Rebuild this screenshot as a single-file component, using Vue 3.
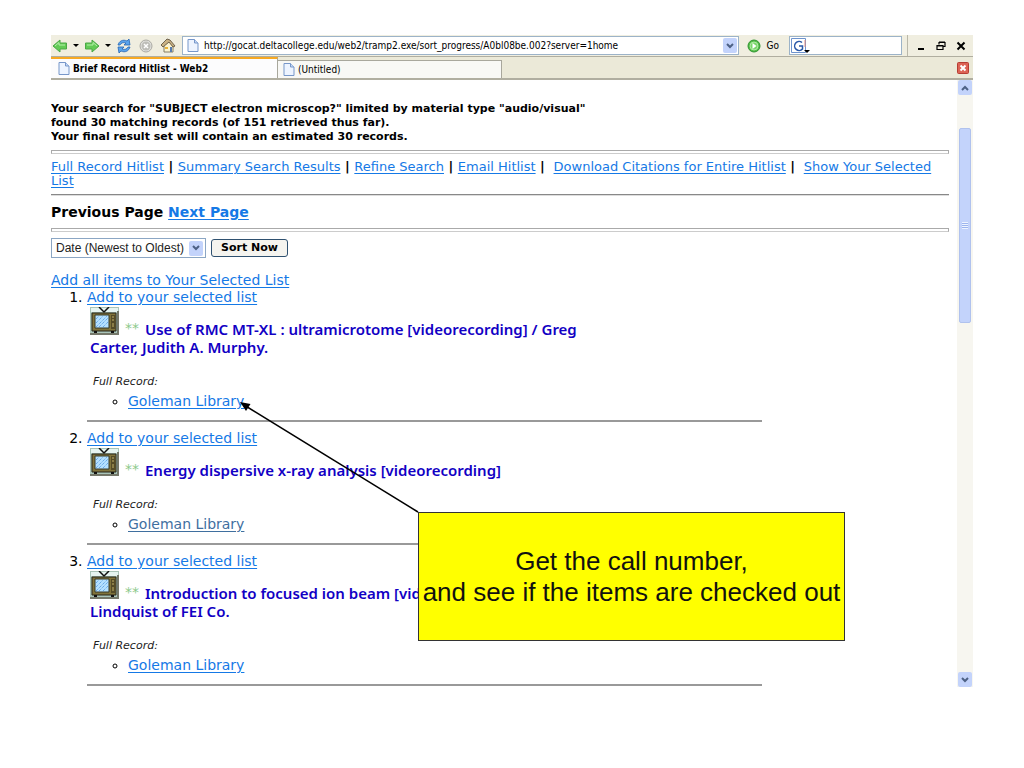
<script setup>
import { ref } from 'vue'

const address = ref('http://gocat.deltacollege.edu/web2/tramp2.exe/sort_progress/A0bl08be.002?server=1home')
const search = ref('')
const sort = ref('date')
const navRows = [
  ['Full Record Hitlist', 'Summary Search Results', 'Refine Search', 'Email Hitlist'],
  ['Download Citations for Entire Hitlist'],
]
const records = [
  { lines: ['Use of RMC MT-XL : ultramicrotome [videorecording] / Greg', 'Carter, Judith A. Murphy.'] },
  { lines: ['Energy dispersive x-ray analysis [videorecording]'], visited: true },
  { lines: ['Introduction to focused ion beam [vide', 'Lindquist of FEI Co.'] },
]
</script>

<template>
  <main class="slide">
    <div class="window">
      <header class="toolbar">
        <button class="nav-btn" aria-label="Back">
          <svg width="16" height="14" viewBox="0 0 16 14"><path d="M1 7 8 1v3h6.500v6H8v3z" fill="#62cb55" stroke="#4aa846" stroke-linejoin="round" /><path d="M3 7 7 3.500V6h6" fill="none" stroke="#b5efaa" /></svg>
        </button>
        <i class="caret"></i>
        <button class="nav-btn" aria-label="Forward">
          <svg width="16" height="14" viewBox="0 0 16 14"><path d="M15 7 8 1v3H1.500v6H8v3z" fill="#62cb55" stroke="#4aa846" stroke-linejoin="round" /><path d="M3 6h6V3.500L13 7" fill="none" stroke="#b5efaa" /></svg>
        </button>
        <i class="caret"></i>
        <button class="nav-btn reload" aria-label="Reload">
          <svg width="16" height="16" viewBox="0 0 16 16"><path d="M2 7C3 3 7 1 11 3l2-2 1 6H8l2-2C7 4 5 5 4 7z" fill="#5aa4ed" stroke="#2464b4" stroke-width=".8" /><path d="M14 9c-1 4-5 6-9 4l-2 2-1-6h6l-2 2c3 1 5 0 6-2z" fill="#5aa4ed" stroke="#2464b4" stroke-width=".8" /></svg>
        </button>
        <button class="nav-btn stop" aria-label="Stop">
          <svg width="14" height="14" viewBox="0 0 14 14"><circle cx="7" cy="7" r="6" fill="#e2e2de" stroke="#aaa9a3" /><circle cx="7" cy="7" r="4.500" fill="#bdbdb8" /><path d="m5 5 4 4m0-4-4 4" stroke="#fff" stroke-width="1.500" /></svg>
        </button>
        <button class="nav-btn home" aria-label="Home">
          <svg width="16" height="15" viewBox="0 0 16 15"><path d="M4 7v7h9V7L9 3z" fill="#fbf4cf" stroke="#847c65" /><path d="M1 7 7 1l3 1 5 6-2 1-4-5-6 5z" fill="#c9b183" stroke="#6f624c" /><path d="M10 9h2v5h-2z" fill="#567bb0" /><path d="M5 9h3v2H5z" fill="#e9b338" /></svg>
        </button>
        <label class="address">
          <svg class="page-icon" width="12" height="13" viewBox="0 0 12 13"><path d="M1 .5h6.500L11 4v8.500H1z" fill="#edf4ff" stroke="#7797c9" /><path d="M7.500.5V4H11" fill="#c5d9f7" stroke="#7797c9" /></svg>
          <input v-model="address" type="text" aria-label="Address" />
          <button class="drop" aria-label="Show history"><svg width="8" height="6" viewBox="0 0 8 6"><path d="m1 1 3 3 3-3" fill="none" stroke="#4d6185" stroke-width="2" /></svg></button>
        </label>
        <button class="go">
          <svg width="14" height="14" viewBox="0 0 14 14"><circle cx="7" cy="7" r="6" fill="#54bd48" stroke="#2f9431" /><circle cx="7" cy="7" r="4" fill="#7bd66c" stroke="#c9f3c0" stroke-width=".7" /><path d="m5.500 4 4 3-4 3z" fill="#fff" /></svg>
          <span>Go</span>
        </button>
        <label class="search">
          <svg width="20" height="16" viewBox="0 0 20 16"><path d="M.5.500h14v14H.5z" fill="#fff" stroke="#6d93cd" /><path d="M11 4.500A4.500 4.500 0 1 0 11.500 11V8H8" fill="none" stroke="#2a58a8" stroke-width="1.500" /><path d="M14 2v7" stroke="#e58a7c" /><path d="M13 12h6l-3 3z" fill="#000" /></svg>
          <input v-model="search" type="text" aria-label="Search" />
        </label>
        <div class="controls">
          <button aria-label="Minimize"><svg width="10" height="10" viewBox="0 0 10 10"><path d="M2 8h6" stroke="#000" stroke-width="2" /></svg></button>
          <button aria-label="Restore"><svg width="10" height="10" viewBox="0 0 10 10"><path d="M3 3.500V1.500h6v4H7M1 4.500h6v4H1zM1 5h6M3 1h6" fill="none" stroke="#000" stroke-width="1.200" /></svg></button>
          <button aria-label="Close"><svg width="10" height="10" viewBox="0 0 10 10"><path d="m1.500 1.500 7 7m0-7-7 7" stroke="#000" stroke-width="2" /></svg></button>
        </div>
      </header>

      <nav class="tabs" aria-label="Tabs">
        <button class="tab active">
          <svg class="page-icon" width="12" height="13" viewBox="0 0 12 13"><path d="M1 .5h6.500L11 4v8.500H1z" fill="#edf4ff" stroke="#7797c9" /><path d="M7.500.5V4H11" fill="#c5d9f7" stroke="#7797c9" /></svg>
          Brief Record Hitlist - Web2
        </button>
        <button class="tab">
          <svg class="page-icon" width="12" height="13" viewBox="0 0 12 13"><path d="M1 .5h6.500L11 4v8.500H1z" fill="#edf4ff" stroke="#7797c9" /><path d="M7.500.5V4H11" fill="#c5d9f7" stroke="#7797c9" /></svg>
          (Untitled)
        </button>
        <button class="close-tab" aria-label="Close tab"><svg width="12" height="12" viewBox="0 0 12 12"><rect x=".5" y=".5" width="11" height="11" rx="1" fill="#dc6355" stroke="#b63d33" /><path d="m3.500 3.500 5 5m0-5-5 5" stroke="#fff" stroke-width="2" /></svg></button>
      </nav>

      <div class="viewport">
        <section class="page">
          <p class="summary">
            Your search for "SUBJECT electron microscop?" limited by material type "audio/visual"<br />
            found 30 matching records (of 151 retrieved thus far).<br />
            Your final result set will contain an estimated 30 records.
          </p>
          <hr class="rule double" />
          <p class="links">
            <template v-for="name in navRows[0]" :key="name"><a href="#">{{ name }}</a><b> | </b></template>
            <template v-for="name in navRows[1]" :key="name">&nbsp;<a href="#">{{ name }}</a><b> | </b></template>
            &nbsp;<a href="#">Show Your Selected<br />List</a>
          </p>
          <hr class="rule" />
          <p class="pager">Previous Page <a href="#">Next Page</a></p>
          <hr class="rule double" />
          <form class="sorter" @submit.prevent>
            <div class="select">
              <select v-model="sort" aria-label="Sort order"><option value="date">Date (Newest to Oldest)</option></select>
              <span class="drop"><svg width="8" height="6" viewBox="0 0 8 6"><path d="m1 1 3 3 3-3" fill="none" stroke="#4d6185" stroke-width="2" /></svg></span>
            </div>
            <button class="sort-btn">Sort Now</button>
          </form>
          <a class="add-all" href="#">Add all items to Your Selected List</a>
          <ol class="records">
            <li v-for="(r, n) in records" :key="n" class="record">
              <a href="#">Add to your selected list</a>
              <div class="title">
                <div class="first">
                  <svg class="tv" width="29" height="28" viewBox="0 0 29 28">
                    <path d="M0 0h29v28H0z" fill="#a9c4b8" /><path d="M1 1h27v4H1z" fill="#e6f4f1" />
                    <path d="M9 0l5 5 5-5" fill="none" stroke="#111" stroke-width="1.500" />
                    <path d="M2 6h24v18H2z" fill="#80733a" stroke="#29261b" />
                    <path d="M5 8h14v13H5z" fill="#b4e0ff" stroke="#363a2b" />
                    <path d="m6 12 3-3m-3 7 7-7m-7 11L17 9M9 20l9-9m-5 9 5-5" stroke="#4a91dd" stroke-dasharray="1 1" />
                    <path d="M21 8h4v14h-4z" fill="#554b27" /><path d="M22 10h2m-2 3h2m-2 4h2m-2 2h2" stroke="#c2b168" />
                    <path d="M0 27h28V4" fill="none" stroke="#75786a" stroke-width="2" /><path d="M4 25h3m14 0h3" stroke="#111" stroke-width="2" />
                  </svg>
                  <span class="stars">**</span>
                  <span>{{ r.lines[0] }}</span>
                </div>
                <div v-if="r.lines[1]" class="second">{{ r.lines[1] }}</div>
              </div>
              <em class="full">Full Record:</em>
              <ul class="holdings"><li><a href="#" :class="{ visited: r.visited }">Goleman Library</a></li></ul>
              <hr class="record-rule" />
            </li>
          </ol>
        </section>
        <div class="scrollbar" aria-hidden="true">
          <span class="drop"><svg width="8" height="6" viewBox="0 0 8 6"><path d="m1 5 3-3 3 3" fill="none" stroke="#4d6185" stroke-width="2" /></svg></span>
          <div class="track"><div class="thumb"><i></i></div></div>
          <span class="drop"><svg width="8" height="6" viewBox="0 0 8 6"><path d="m1 1 3 3 3-3" fill="none" stroke="#4d6185" stroke-width="2" /></svg></span>
        </div>
      </div>

      <svg class="pointer" width="180" height="112" viewBox="0 0 180 112"><path d="M5 4 179 111" stroke="#000" stroke-width="1.500" /><path d="m1 1 10.500 2-4.500 7z" fill="#000" /></svg>
      <aside class="callout">Get the call number,<br />and see if the items are checked out</aside>
    </div>
  </main>
</template>

<style>
body { margin: 0; background: #fff; }
</style>

<style scoped>
* { box-sizing: border-box; }
.slide { padding: 35px 51px 0; font-family: "DejaVu Sans", sans-serif; }
.window { position: relative; }
p, ol, ul { margin: 0; padding: 0; }
button { padding: 0; border: 0; background: none; font: inherit; color: #000; }
input { border: 0; padding: 0; outline: 0; background: none; min-width: 0; }
svg { display: block; flex: none; }
a { color: #1579e6; text-decoration: underline; text-underline-offset: 2px; }

.toolbar { display: flex; align-items: center; height: 22px; background: #f0eee0; border-bottom: 1px solid #b0aea0; font: 10px "DejaVu Sans Condensed", "DejaVu Sans", sans-serif; }
.nav-btn { width: 18px; display: flex; justify-content: center; }
.caret { margin: 0 4px; border: 3px solid transparent; border-top-color: #000; border-bottom: 0; }
.stop, .home { margin-left: 4px; }
.address { display: flex; align-items: center; flex: 1; height: 19px; margin-left: 5px; padding: 0 1px 0 4px; gap: 5px; background: #fff; border: 1px solid #9cb3c8; }
.address input { flex: 1; height: 17px; font: 10px/17px "DejaVu Sans Condensed", "DejaVu Sans", sans-serif; }
.drop { display: flex; align-items: center; justify-content: center; width: 14px; height: 15px; background: #c3d3fb; border-radius: 2px; flex: none; }
.go { display: flex; align-items: center; gap: 6px; margin: 0 10px 0 8px; }
.search { display: flex; align-items: center; width: 113px; height: 19px; padding-left: 1px; background: #fff; border: 1px solid #9cb3c8; }
.search input { flex: 1; }
.controls { display: flex; align-items: center; align-self: stretch; gap: 10px; margin-left: 5px; padding: 0 7px 0 8px; border-left: 1px solid #bab8a9; }

.tabs { display: flex; align-items: flex-end; height: 23px; background: #ebe9d8; border-bottom: 2px solid #b0aea0; font: 10px "DejaVu Sans Condensed", "DejaVu Sans", sans-serif; }
.tab { display: flex; align-items: center; width: 224px; height: 18px; gap: 3px; padding-left: 5px; background: #f8f8f5; border: 1px solid #a8a79c; border-bottom: 0; border-left: 0; }
.tab.active { width: 227px; height: 21px; padding-left: 7px; background: #fcfcfd; border-top: 2px solid #f7a923; font-weight: bold; }
.close-tab { align-self: center; margin: 0 4px 0 auto; }

.viewport { display: flex; height: 607px; overflow: hidden; }
.page { flex: 1; padding: 22px 8px 0 0; min-width: 0; }
.scrollbar { display: flex; flex-direction: column; align-items: center; width: 16px; background: #f7f6f0; }
.track { flex: 1; align-self: stretch; padding: 33px 2px 0; }
.thumb { display: flex; align-items: center; justify-content: center; height: 195px; background: #c3d3fb; border: 1px solid #b0c2ee; border-radius: 2px; }
.thumb i { width: 6px; height: 7px; background: repeating-linear-gradient(#eef4ff 0 1px, #9cb4ee 1px 2px); }

.summary { font-size: 11px; font-weight: bold; line-height: 14px; white-space: nowrap; }
.rule { height: 2px; margin: 6px 0; border: 0; border-top: 1px solid #888; border-bottom: 1px solid #ddd; }
.rule.double { height: 4px; border: 1px solid #aaa; border-bottom-color: #ccc; }
.links { font-size: 13px; line-height: 14px; white-space: nowrap; }
.pager { padding: 1px 0; font-size: 14px; font-weight: bold; line-height: 18px; }
.sorter { display: flex; align-items: center; gap: 5px; height: 20px; margin-top: 6px; }
.select { display: flex; align-items: center; width: 155px; height: 20px; padding-right: 2px; border: 1px solid #8ba6c4; }
.select select { appearance: none; flex: 1; min-width: 0; border: 0; padding: 0 0 0 4px; background: none; color: #222; font: 12px "Liberation Sans", sans-serif; }
.sort-btn { width: 77px; height: 18px; border: 1px solid #2f5170; border-radius: 3px; background: #f5f4ef; font-size: 11px; font-weight: bold; line-height: 14px; }
.add-all { display: block; width: fit-content; margin-top: 14px; font-size: 14px; line-height: 17px; }
.records { padding-left: 36px; font-size: 14px; line-height: 17px; }
.record { width: 675px; max-width: 100%; }
.title { padding-left: 3px; color: #1200c4; font: 600 15px/18px "Noto Sans", sans-serif; white-space: nowrap; }
.first { display: flex; align-items: flex-end; gap: 6px; height: 32px; }
.first .tv { align-self: flex-start; margin-top: 1px; }
.stars { color: #8cc98a; font: 14px/20px "DejaVu Sans", sans-serif; }
.full { display: block; margin: 17px 0 0 6px; font-size: 11px; line-height: 18px; color: #222; }
.holdings { padding-left: 41px; line-height: 20px; list-style: circle; }
.visited { color: #3f6f9f; }
.record-rule { height: 2px; margin: 9px 0 8px; border: 0; background: #999; }

.pointer { position: absolute; left: 188px; top: 366px; }
.callout { position: absolute; left: 367px; top: 477px; width: 427px; min-height: 129px; padding: 33px 0 32px; background: #ff0; border: 1px solid #333; color: #111; font: 26px/31px "Liberation Sans", sans-serif; text-align: center; white-space: nowrap; }
</style>
